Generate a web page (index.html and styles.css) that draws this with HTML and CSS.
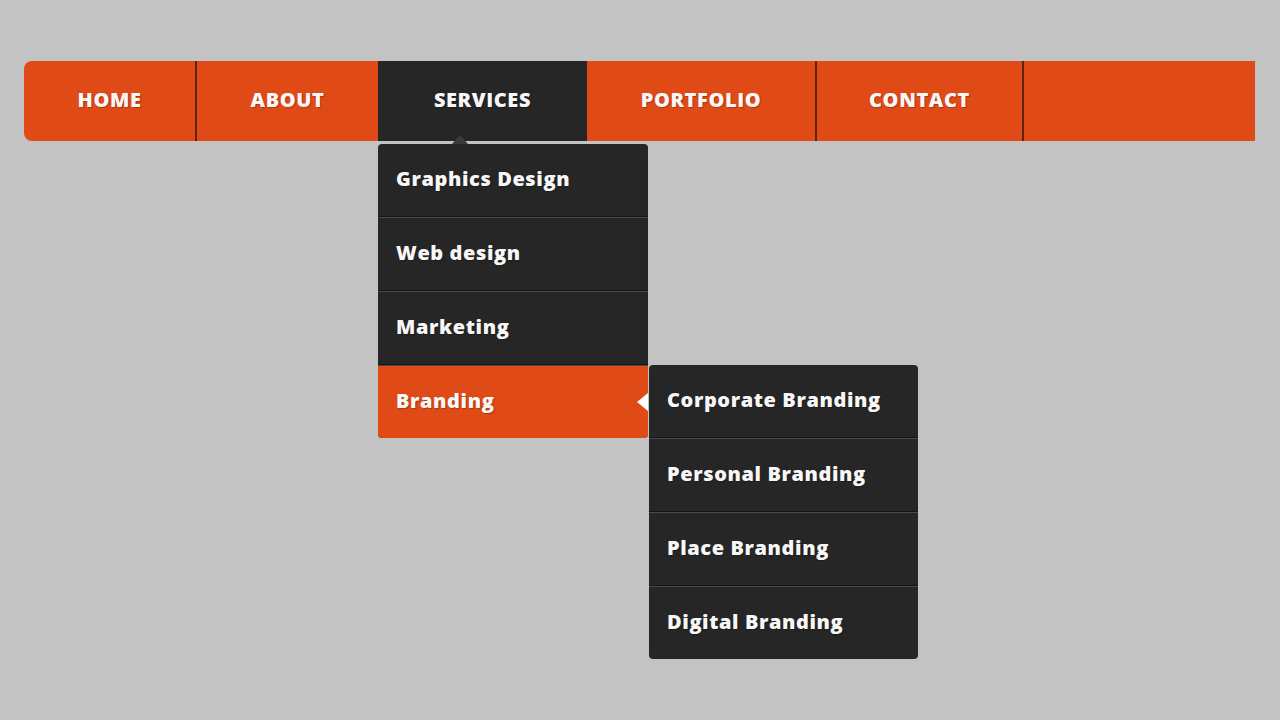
FILE: index.html
```html
<!DOCTYPE html>
<html lang="en">

<head>
  <meta charset="UTF-8">
  <meta name="viewport" content="width=device-width, initial-scale=1.0">
  <title>Dropdown Menu</title>
  <link rel="stylesheet" href="styles.css">
</head>

<body>
  <!-- main navigation -->
  <div class="nav">
    <ul class="menu">
      <li class="menu-item home"><a href="#">HOME</a></li>
      <li class="menu-item about"><a href="#">ABOUT</a></li>
      <li class="menu-item services active">
        <a href="#">SERVICES</a>
        <ul class="dropdown">
          <li><a href="#">Graphics Design</a></li>
          <li><a href="#">Web design</a></li>
          <li><a href="#">Marketing</a></li>
          <li class="has-sub open">
            <a href="#">Branding</a>
            <ul class="dropdown sub">
              <li><a href="#">Corporate Branding</a></li>
              <li><a href="#">Personal Branding</a></li>
              <li><a href="#">Place Branding</a></li>
              <li><a href="#">Digital Branding</a></li>
            </ul>
          </li>
        </ul>
      </li>
      <li class="menu-item portfolio"><a href="#">PORTFOLIO</a></li>
      <li class="menu-item contact"><a href="#">CONTACT</a></li>
      <li class="menu-item filler"></li>
    </ul>
  </div>
</body>

</html>
```

FILE: styles.css
```css
html,
body {
  min-height: 100%;
}

body {
  margin: 0;
  min-height: 720px;
  background: #c3c3c3;
  font-family: "Open Sans", Lato, sans-serif;
}

ul {
  list-style: none;
  margin: 0;
  padding: 0;
}

a {
  text-decoration: none;
  color: #f7f7f7;
  text-shadow: 1px 1px 1px rgba(0, 0, 0, 0.25);
}

.nav {
  padding: 61px 25px 0 24px;
}

.menu {
  display: flex;
  height: 80px;
  background: #e04a17;
  border-radius: 8px 0 0 8px;
}

.menu-item {
  position: relative;
  border-left: 2px solid #5e2410;
}

.menu-item > a {
  display: block;
  line-height: 78px;
  text-align: center;
  font-size: 20px;
  font-weight: 800;
  letter-spacing: 0.6px;
}

.home {
  width: 171px;
  border-left: none;
}

.about {
  width: 181px;
}

.services {
  width: 209px;
  border-left: none;
}

.portfolio {
  width: 228px;
  border-left: none;
}

.contact {
  width: 205px;
}

.filler {
  flex: 1;
}

.active {
  background: #262626;
}

/* dropdown */
.dropdown {
  position: absolute;
  top: 83px;
  left: 0;
  width: 270px;
  background: #262626;
  border-radius: 4px;
  z-index: 2;
}

.dropdown::before {
  content: '';
  position: absolute;
  top: -9px;
  left: 74px;
  border-left: 8px solid transparent;
  border-right: 8px solid transparent;
  border-bottom: 9px solid #3a3a3a;
}

.dropdown li {
  position: relative;
  border-top: 1px solid #4a4a4a;
  border-bottom: 1px solid #141414;
}

.dropdown li:first-child {
  border-top: none;
}

.dropdown li:last-child {
  border-bottom: none;
}

.dropdown a {
  display: block;
  line-height: 70px;
  padding: 0 0 2px 18px;
  font-size: 20px;
  font-weight: 800;
  letter-spacing: 0.6px;
}

.has-sub.open {
  background: #e04a17;
  border-radius: 0 0 4px 4px;
}

.has-sub.open::after {
  content: '';
  position: absolute;
  top: 50%;
  right: 0;
  margin-top: -9px;
  border-top: 9px solid transparent;
  border-bottom: 9px solid transparent;
  border-right: 11px solid #fff;
}

.sub {
  top: -1px;
  left: 271px;
  width: 269px;
}

.sub::before {
  display: none;
}
```
